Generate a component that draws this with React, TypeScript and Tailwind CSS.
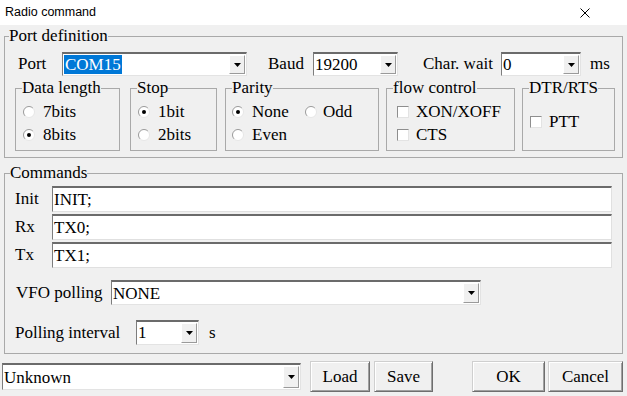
import React from "react";
import clsx from "clsx";

function Arrow() {
  return (
    <svg width="7" height="4" viewBox="0 0 7 4">
      <path d="M0 0h7L3.5 4z" fill="#000" />
    </svg>
  );
}

function Combo({ className, value, sel }: { className: string; value: string; sel?: boolean }) {
  return (
    <div
      className={clsx(
        "flex items-stretch bg-white border-t-2 border-l border-r border-b border-t-[#6b6b6b] border-l-[#7d7d7d] border-r-[#e3e3e3] border-b-[#e3e3e3]",
        className
      )}
    >
      <div className="flex-1 flex items-center pl-[1px] overflow-hidden whitespace-nowrap leading-none">
        {sel ? <span className="bg-[#0078d7] text-white px-[1px] py-[1px]">{value}</span> : value}
      </div>
      <div className="w-[16px] my-[1px] mr-[1px] bg-[#f0f0f0] border border-t-white border-l-white border-r-[#9a9a9a] border-b-[#9a9a9a] flex items-center justify-center">
        <Arrow />
      </div>
    </div>
  );
}

function Radio({ checked }: { checked?: boolean }) {
  return (
    <svg width="12" height="12" viewBox="0 0 12 12" className="shrink-0">
      <circle cx="6" cy="6" r="5.5" fill="#fff" />
      <path d="M2.1 9.9A5.5 5.5 0 0 1 9.9 2.1" stroke="#9a9a9a" fill="none" />
      <path d="M9.9 2.1A5.5 5.5 0 0 1 2.1 9.9" stroke="#e6e6e6" fill="none" />
      {checked && <circle cx="6" cy="6" r="2" fill="#000" />}
    </svg>
  );
}

function Check() {
  return (
    <div className="w-[12px] h-[12px] shrink-0 bg-white border border-t-[#8e8e8e] border-l-[#8e8e8e] border-r-[#e3e3e3] border-b-[#e3e3e3]" />
  );
}

function Field({ value }: { value: string }) {
  return (
    <div className="flex-1 h-[26px] flex items-center pl-[1px] bg-white border-t-2 border-l border-r border-b border-t-[#6b6b6b] border-l-[#7d7d7d] border-r-[#e0e0e0] border-b-[#e0e0e0] leading-none">
      {value}
    </div>
  );
}

function Button({ className, label }: { className: string; label: string }) {
  return (
    <div
      className={clsx(
        "h-[31px] flex items-center justify-center bg-[#f0f0f0] border border-t-[#cfcfcf] border-l-[#cfcfcf] border-r-[#6e6e6e] border-b-[#6e6e6e] shadow-[inset_1px_1px_0_#fff,inset_-1px_-1px_0_#a0a0a0] leading-none",
        className
      )}
    >
      {label}
    </div>
  );
}

const group = "border border-[#a9a9a9] h-[71px]";
const legend = "ml-[6px] leading-[16px]";

export default function App() {
  return (
    <div className="w-[627px] h-[396px] bg-[#f0f0f0] overflow-hidden font-['Liberation_Serif',serif] text-[17px] text-black">
      {/* title bar */}
      <div className="h-[25px] bg-white flex items-center justify-between pl-[5px] pr-[37px]">
        <span className="font-['Liberation_Sans',sans-serif] text-[12.5px] leading-none">Radio command</span>
        <svg width="10" height="10" viewBox="0 0 10 10">
          <path d="M0.5 0.5l9 9M9.5 0.5l-9 9" stroke="#000" strokeWidth="1" />
        </svg>
      </div>

      <div className="px-[4px] pt-[2px]">
        <fieldset className="border border-[#a9a9a9] h-[131px]">
          <legend className="ml-[4px] leading-[18px]">Port definition</legend>
          <div className="flex items-center h-[24px] mt-[7px] pl-[13px]">
            <span className="w-[44px]">Port</span>
            <Combo className="w-[185px] h-[24px]" value="COM15" sel />
            <span className="ml-[21px] w-[45px]">Baud</span>
            <Combo className="w-[85px] h-[24px]" value="19200" />
            <span className="ml-[25px] w-[78px]">Char. wait</span>
            <Combo className="w-[80px] h-[24px]" value="0" />
            <span className="ml-[9px]">ms</span>
          </div>

          <div className="flex mt-[4px] pl-[10px]">
            <fieldset className={clsx(group, "w-[105px]")}>
              <legend className={legend}>Data length</legend>
              <div className="pt-[4px] pl-[7px]">
                <div className="h-[23px] flex items-center gap-[8px]"><Radio />7bits</div>
                <div className="h-[23px] flex items-center gap-[8px]"><Radio checked />8bits</div>
              </div>
            </fieldset>
            <fieldset className={clsx(group, "w-[87px] ml-[10px]")}>
              <legend className={legend}>Stop</legend>
              <div className="pt-[4px] pl-[7px]">
                <div className="h-[23px] flex items-center gap-[8px]"><Radio checked />1bit</div>
                <div className="h-[23px] flex items-center gap-[8px]"><Radio />2bits</div>
              </div>
            </fieldset>
            <fieldset className={clsx(group, "w-[154px] ml-[8px]")}>
              <legend className={legend}>Parity</legend>
              <div className="pt-[4px] pl-[6px] grid grid-cols-[73px_1fr]">
                <div className="h-[23px] flex items-center gap-[8px]"><Radio checked />None</div>
                <div className="h-[23px] flex items-center gap-[6px]"><Radio />Odd</div>
                <div className="h-[23px] flex items-center gap-[8px]"><Radio />Even</div>
              </div>
            </fieldset>
            <fieldset className={clsx(group, "w-[129px] ml-[7px]")}>
              <legend className={legend}>flow control</legend>
              <div className="pt-[4px] pl-[10px]">
                <div className="h-[23px] flex items-center gap-[7px]"><Check />XON/XOFF</div>
                <div className="h-[23px] flex items-center gap-[7px]"><Check />CTS</div>
              </div>
            </fieldset>
            <fieldset className={clsx(group, "w-[93px] ml-[7px]")}>
              <legend className={legend}>DTR/RTS</legend>
              <div className="pt-[14px] pl-[7px]">
                <div className="h-[23px] flex items-center gap-[7px]"><Check />PTT</div>
              </div>
            </fieldset>
          </div>
        </fieldset>

        <fieldset className="border border-[#a9a9a9] h-[190px] mt-[6px]">
          <legend className="ml-[5px] leading-[18px]">Commands</legend>
          <div className="flex flex-col gap-[2px] mt-[4px] pl-[10px] pr-[10px]">
            <div className="flex items-center">
              <span className="w-[37px]">Init</span>
              <Field value="INIT;" />
            </div>
            <div className="flex items-center">
              <span className="w-[37px]">Rx</span>
              <Field value="TX0;" />
            </div>
            <div className="flex items-center">
              <span className="w-[37px]">Tx</span>
              <Field value="TX1;" />
            </div>
          </div>
          <div className="flex items-center mt-[12px] pl-[11px]">
            <span className="w-[95px]">VFO polling</span>
            <Combo className="w-[370px] h-[25px]" value="NONE" />
          </div>
          <div className="flex items-center mt-[14px] pl-[10px]">
            <span className="w-[121px]">Polling interval</span>
            <Combo className="w-[63px] h-[25px]" value="1" />
            <span className="ml-[10px]">s</span>
          </div>
        </fieldset>
      </div>

      <div className="flex items-start mt-[7px] pl-[2px]">
        <Combo className="w-[299px] h-[27px] mt-[2px]" value="Unknown" />
        <Button className="w-[60px] ml-[9px]" label="Load" />
        <Button className="w-[59px] ml-[4px]" label="Save" />
        <Button className="w-[73px] ml-[39px]" label="OK" />
        <Button className="w-[75px] ml-[3px]" label="Cancel" />
      </div>
    </div>
  );
}
